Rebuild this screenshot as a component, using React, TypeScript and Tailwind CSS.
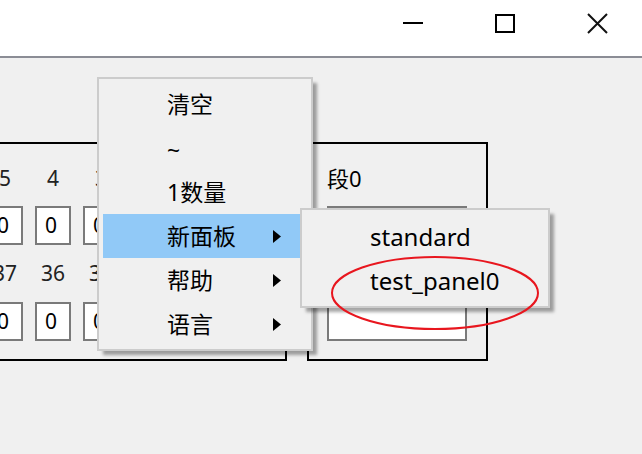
import React from 'react';

const font = { fontFamily: '"Noto Sans", "Noto Sans CJK SC", sans-serif' };

const topLabels = ['5', '4', '3', '2', '1', '0'];
const bottomLabels = ['37', '36', '35', '34', '33', '32'];

function EditBox({ wide = false }: { wide?: boolean }) {
  return (
    <div
      className={`${wide ? 'w-[140px]' : 'w-[36px]'} h-[39px] border-2 border-[#7a7a7a] bg-white pl-[8px] flex items-center text-[21px] leading-none text-black`}
    >
      {wide ? '' : '0'}
    </div>
  );
}

function Arrow() {
  return (
    <svg width="8" height="13" viewBox="0 0 8 13" className="mr-[26px]">
      <path d="M0 0 L8 6.5 L0 13 Z" fill="#000" />
    </svg>
  );
}

function MenuRow({ label, sub = false, active = false }: { label: string; sub?: boolean; active?: boolean }) {
  return (
    <div className={`h-[44px] flex items-center pl-[64px] ${active ? 'bg-[#91c9f7]' : ''}`}>
      <span className={`flex-1 text-[23px] text-black leading-none ${label === '~' ? 'pt-[4px]' : ''}`}>{label}</span>
      {sub && <Arrow />}
    </div>
  );
}

export default function App() {
  return (
    <div className="relative w-[642px] h-[454px] overflow-hidden bg-[#f0f0f0]" style={font}>
      {/* title bar */}
      <div className="h-[56px] bg-white flex justify-end -mr-[1px]">
        <div className="w-[92px] flex items-center justify-center">
          <div className="w-[20px] h-[2px] bg-black -mt-[10px]" />
        </div>
        <div className="w-[92px] flex items-center justify-center">
          <div className="w-[20px] h-[19px] border-2 border-black -mt-[10px]" />
        </div>
        <div className="w-[92px] flex items-center justify-center">
          <svg width="21" height="21" viewBox="0 0 21 21" className="-mt-[10px]">
            <path d="M1 1 L20 20 M20 1 L1 20" stroke="#111" strokeWidth="2" />
          </svg>
        </div>
      </div>
      <div className="h-[2px] bg-[#8b8d95]" />

      {/* content */}
      <div className="flex mt-[84px] -ml-[40px] gap-[20px]">
        <div className="w-[327px] h-[219px] border-2 border-black pt-[20px] pl-[25px] flex gap-[12px]">
          {topLabels.map((t, i) => (
            <div key={t} className="w-[36px] flex flex-col">
              <div className="h-[28px] flex items-center justify-center text-[21px] text-[#222] leading-none">{t}</div>
              <div className="mt-[14px]">
                <EditBox />
              </div>
              <div className="h-[28px] mt-[14px] flex items-center justify-center text-[21px] text-[#222] leading-none">
                {bottomLabels[i]}
              </div>
              <div className="mt-[15px]">
                <EditBox />
              </div>
            </div>
          ))}
        </div>
        <div className="w-[181px] h-[219px] border-2 border-black pt-[20px] pl-[18px] flex flex-col">
          <div className="h-[28px] flex items-center text-[22px] text-black leading-none">段0</div>
          <div className="mt-[14px]">
            <EditBox wide />
          </div>
          <div className="mt-[57px]">
            <EditBox wide />
          </div>
        </div>
      </div>

      {/* context menu */}
      <div className="absolute left-[97px] top-[77px] w-[216px] h-[274px] bg-[#f0f0f0] border-2 border-[#cccccc] pt-[3px] px-[4px] shadow-[5px_5px_3px_-1px_rgba(0,0,0,0.35)]">
        <MenuRow label="清空" />
        <MenuRow label="~" />
        <MenuRow label="1数量" />
        <MenuRow label="新面板" sub active />
        <MenuRow label="帮助" sub />
        <MenuRow label="语言" sub />
      </div>

      {/* submenu */}
      <div className="absolute left-[300px] top-[208px] w-[250px] h-[100px] bg-[#f0f0f0] border-2 border-[#cccccc] pt-[5px] shadow-[5px_5px_3px_-1px_rgba(0,0,0,0.35)]">
        <div className="h-[44px] flex items-center pl-[68px] text-[24px] text-black leading-none">standard</div>
        <div className="h-[44px] flex items-center pl-[68px] text-[24px] text-black leading-none">test_panel0</div>
      </div>

      {/* annotation */}
      <svg className="absolute left-[330px] top-[255px]" width="212" height="78" viewBox="0 0 212 78">
        <ellipse cx="105" cy="38" rx="103" ry="36" fill="none" stroke="#e8161e" strokeWidth="2" />
      </svg>
    </div>
  );
}
